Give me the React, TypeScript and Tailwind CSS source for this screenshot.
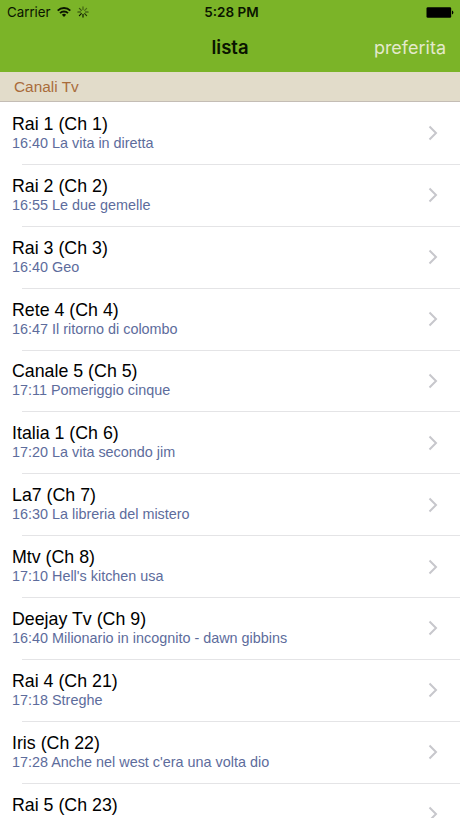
import React from 'react';

interface Channel {
  name: string;
  time: string;
  show: string;
}

const channels: Channel[] = [
  { name: 'Rai 1 (Ch 1)', time: '16:40', show: 'La vita in diretta' },
  { name: 'Rai 2 (Ch 2)', time: '16:55', show: 'Le due gemelle' },
  { name: 'Rai 3 (Ch 3)', time: '16:40', show: 'Geo' },
  { name: 'Rete 4 (Ch 4)', time: '16:47', show: 'Il ritorno di colombo' },
  { name: 'Canale 5 (Ch 5)', time: '17:11', show: 'Pomeriggio cinque' },
  { name: 'Italia 1 (Ch 6)', time: '17:20', show: 'La vita secondo jim' },
  { name: 'La7 (Ch 7)', time: '16:30', show: 'La libreria del mistero' },
  { name: 'Mtv (Ch 8)', time: '17:10', show: "Hell's kitchen usa" },
  { name: 'Deejay Tv (Ch 9)', time: '16:40', show: 'Milionario in incognito - dawn gibbins' },
  { name: 'Rai 4 (Ch 21)', time: '17:18', show: 'Streghe' },
  { name: 'Iris (Ch 22)', time: '17:28', show: "Anche nel west c'era una volta dio" },
  { name: 'Rai 5 (Ch 23)', time: '16:30', show: 'Passepartout' },
];

const WifiIcon = () => (
  <svg className="h-[10px] w-[14px]" viewBox="0 0 14 10" fill="none" stroke="#0a1500" strokeWidth="1.9">
    <path d="M0.7 3.6a9 9 0 0 1 12.6 0" />
    <path d="M3 6.1a5.7 5.7 0 0 1 8 0" />
    <path d="M7 10L4.9 7.8a3 3 0 0 1 4.2 0z" fill="#0a1500" stroke="none" />
  </svg>
);

// Spokes fade around the circle like the iOS activity indicator
const spokes = [0.5, 0.45, 0.7, 0.8, 1, 1, 0.75, 0.6];

const Spinner = () => (
  <svg className="h-[12px] w-[12px]" viewBox="-6 -6 12 12" stroke="#0a1500" strokeWidth="1.2" strokeLinecap="round">
    {spokes.map((opacity, i) => (
      <path key={i} d="M0 -2.4V-5.1" opacity={opacity} transform={`rotate(${i * 45})`} />
    ))}
  </svg>
);

const Battery = () => (
  <svg className="h-[11px] w-[28px]" viewBox="0 0 28 11" fill="#000">
    <rect x="0.5" y="0.3" width="24.7" height="10.4" rx="1.3" />
    <path d="M26 3.6q1.4 0.3 1.4 1.9t-1.4 1.9z" />
  </svg>
);

const Chevron = () => (
  <svg className="h-[16px] w-[10px]" viewBox="0 0 10 16" fill="none" stroke="#c7c7cc" strokeWidth="2">
    <path d="M1.5 1.5L8 8L1.5 14.5" />
  </svg>
);

const ChannelRow = ({ channel }: { channel: Channel }) => (
  <li className="flex h-[61.88px] shrink-0 flex-col">
    <div className="flex flex-1 items-center justify-between pl-3 pr-[22px]">
      <div className="pb-[1.6px]">
        <p className="text-[17.8px] leading-[21px] text-black">{channel.name}</p>
        <p className="text-[14.4px] leading-[16.4px] text-[#5d6c9c]">
          {channel.time} {channel.show}
        </p>
      </div>
      <Chevron />
    </div>
    <div className="ml-[22px] h-px bg-[#e4e4e6]" />
  </li>
);

export default function App() {
  return (
    <div className="flex h-[818px] w-[460px] flex-col overflow-hidden bg-white font-['Liberation_Sans',Arial,sans-serif]">
      <header className="h-[72px] shrink-0 bg-[#7bb428] font-['Inter',sans-serif]">
        <div className="grid h-6 grid-cols-3 items-center pl-[7px] pr-[6px]">
          <div className="flex items-center gap-[6px]">
            <span className="pt-px text-[13.3px] text-[#0a1500]">Carrier</span>
            <WifiIcon />
            <Spinner />
          </div>
          <span className="pl-[2px] text-center text-[13.5px] font-semibold text-[#0a1500]">5:28 PM</span>
          <div className="flex justify-end">
            <Battery />
          </div>
        </div>
        <div className="grid h-[47px] grid-cols-3 items-center px-[14px]">
          <h1 className="col-start-2 text-center text-[18.5px] font-semibold text-[#0a1500]">lista</h1>
          <span className="text-right text-[18px] text-[#e4e9cc]">preferita</span>
        </div>
      </header>

      <div className="flex h-[30px] shrink-0 items-center border-b border-[#c4bdb5] bg-[#e2dcca] pl-[14px] text-[15.4px] text-[#a96c3b]">
        Canali Tv
      </div>

      <ul className="flex flex-col pt-[1px]">
        {channels.map((channel) => (
          <ChannelRow key={channel.name} channel={channel} />
        ))}
      </ul>
    </div>
  );
}
